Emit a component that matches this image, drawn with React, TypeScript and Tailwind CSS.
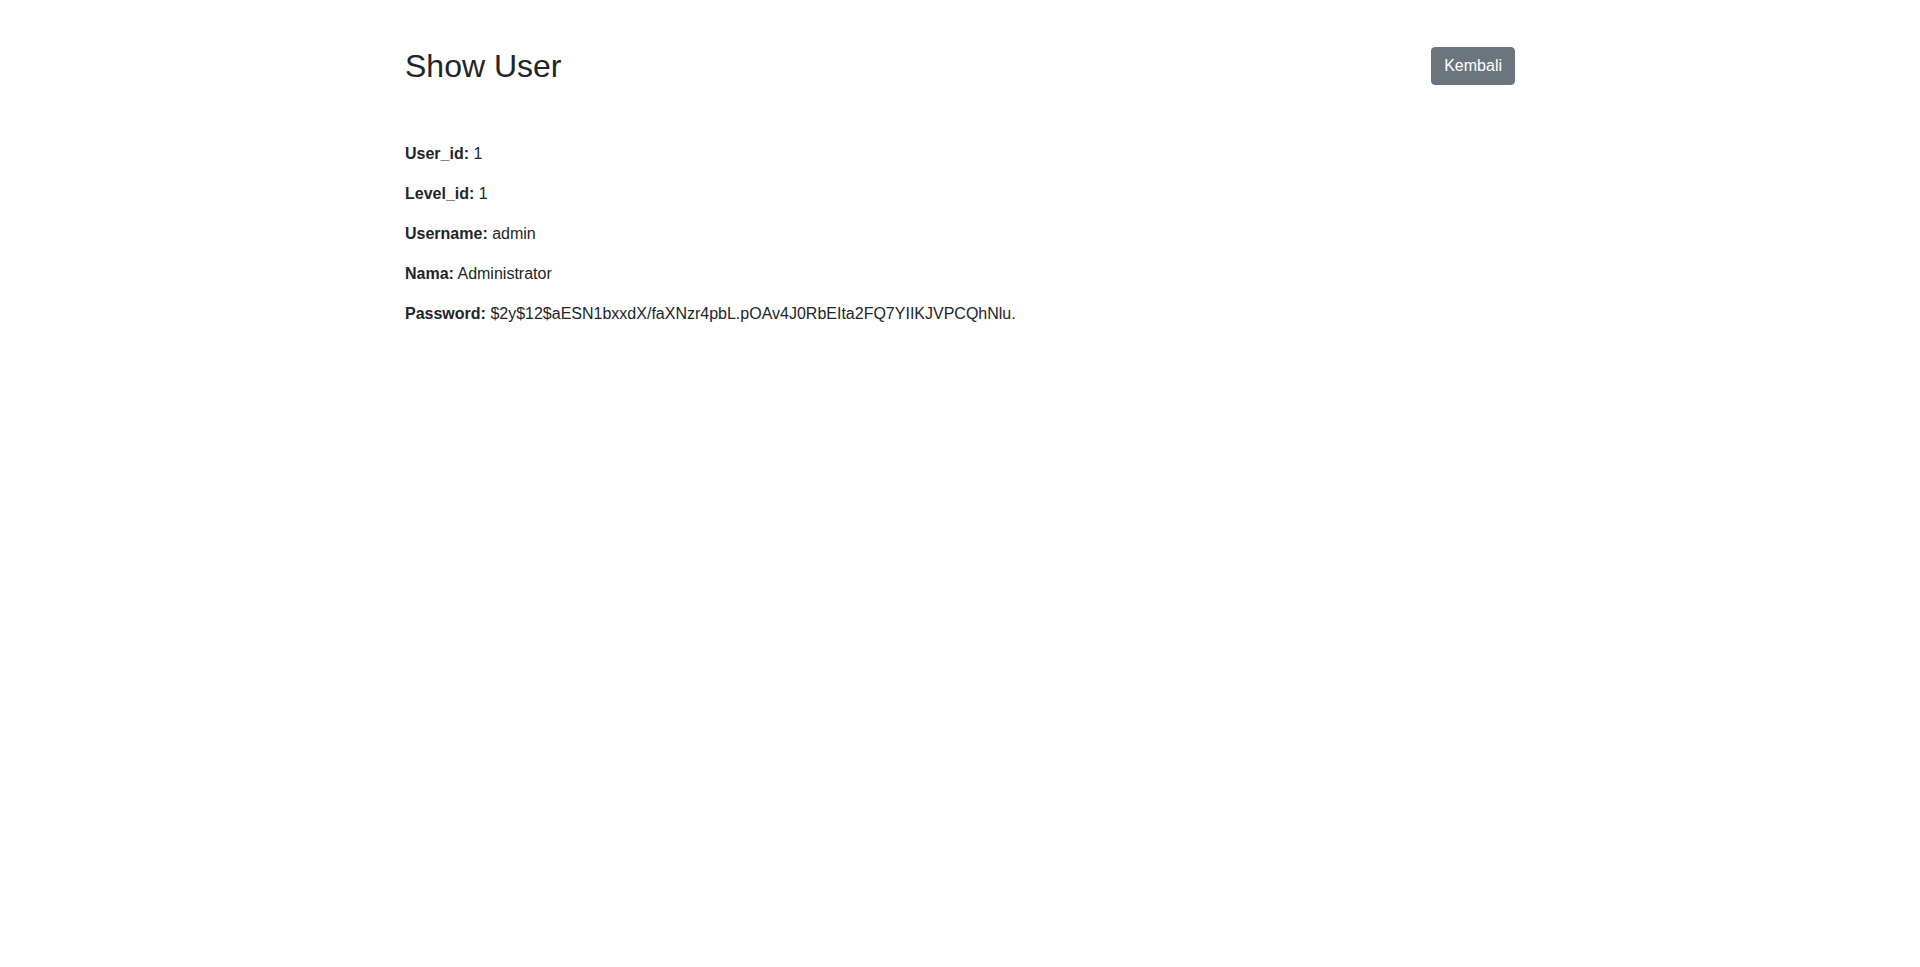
const fields = [
    { label: 'User_id', value: '1' },
    { label: 'Level_id', value: '1' },
    { label: 'Username', value: 'admin' },
    { label: 'Nama', value: 'Administrator' },
    { label: 'Password', value: '$2y$12$aESN1bxxdX/faXNzr4pbL.pOAv4J0RbEIta2FQ7YIIKJVPCQhNlu.' },
];

export default function App() {
    return (
        <div className="min-h-screen bg-white text-[#212529] font-['Liberation_Sans',Arial,sans-serif] text-base leading-6">
            <div className="mx-auto w-[1140px] px-[15px]">
                <div className="flex items-start justify-between pt-[47px]">
                    <h2 className="text-[32px] font-medium leading-[1.2]">Show User</h2>
                    <a
                        href="#"
                        className="rounded-[4px] border border-[#6c757d] bg-[#6c757d] px-3 py-[6px] text-base leading-6 text-white"
                    >
                        Kembali
                    </a>
                </div>
                <div className="flex flex-col gap-4 pt-[57px]">
                    {fields.map((field) => (
                        <div key={field.label}>
                            <strong className="font-bold">{field.label}:</strong> {field.value}
                        </div>
                    ))}
                </div>
            </div>
        </div>
    );
}
